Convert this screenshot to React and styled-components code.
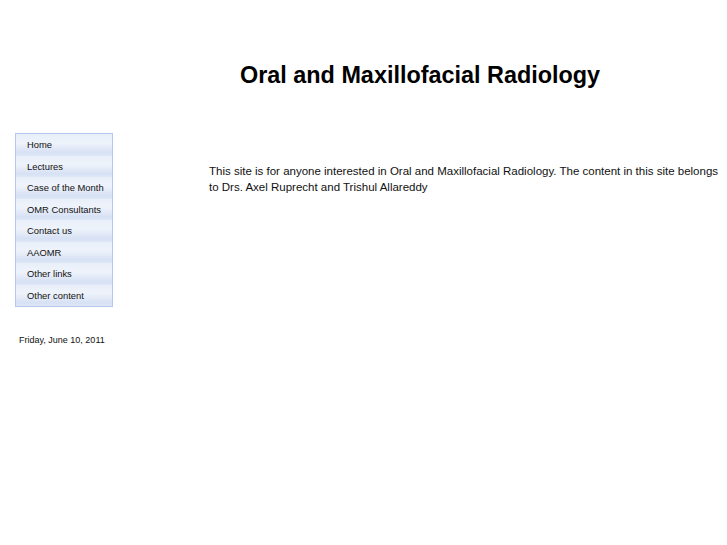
import React from 'react';
import styled, { createGlobalStyle } from 'styled-components';

const GlobalStyle = createGlobalStyle`
  html, body {
    margin: 0;
    padding: 0;
    background: #ffffff;
  }
  body {
    font-family: "Liberation Sans", Arial, sans-serif;
    color: #000000;
  }
`;

const Page = styled.div`
  width: 727px;
  height: 545px;
  overflow: hidden;
`;

const Header = styled.h1`
  margin: 0;
  padding: 61px 0 0 240px;
  height: 39px;
  font-size: 23.4px;
  font-weight: bold;
  line-height: 28px;
  white-space: nowrap;
`;

const Body = styled.div`
  display: grid;
  grid-template-columns: 98px 1fr;
  column-gap: 96px;
  padding: 33px 0 0 15px;
`;

const Sidebar = styled.div`
  display: flex;
  flex-direction: column;
`;

const Menu = styled.ul`
  list-style: none;
  margin: 0;
  padding: 0;
  border: 1px solid #b3c8ec;
`;

const MenuItem = styled.li`
  height: 21.5px;
  display: flex;
  align-items: center;
  padding-left: 11px;
  font-size: 9.4px;
  color: #111;
  background: linear-gradient(
    to bottom,
    #e9eff9 0%,
    #eef3fb 40%,
    #e2e9f7 65%,
    #d6e1f4 85%,
    #dfe7f7 100%
  );
  box-sizing: border-box;
`;

const DateLine = styled.div`
  margin-top: 28px;
  padding-left: 4px;
  font-size: 9px;
  color: #111;
`;

const Content = styled.p`
  margin: 30px 0 0 0;
  font-size: 11.5px;
  line-height: 16px;
  color: #111;
  width: 511px;
`;

const links = [
  'Home',
  'Lectures',
  'Case of the Month',
  'OMR Consultants',
  'Contact us',
  'AAOMR',
  'Other links',
  'Other content',
];

function App() {
  return (
    <Page>
      <GlobalStyle />
      <Header>Oral and Maxillofacial Radiology</Header>
      <Body>
        <Sidebar>
          <Menu>
            {links.map((link) => (
              <MenuItem key={link}>{link}</MenuItem>
            ))}
          </Menu>
          <DateLine>Friday, June 10, 2011</DateLine>
        </Sidebar>
        <Content>
          This site is for anyone interested in Oral and Maxillofacial
          Radiology. The content in this site belongs to Drs. Axel Ruprecht and
          Trishul Allareddy
        </Content>
      </Body>
    </Page>
  );
}

export default App;
